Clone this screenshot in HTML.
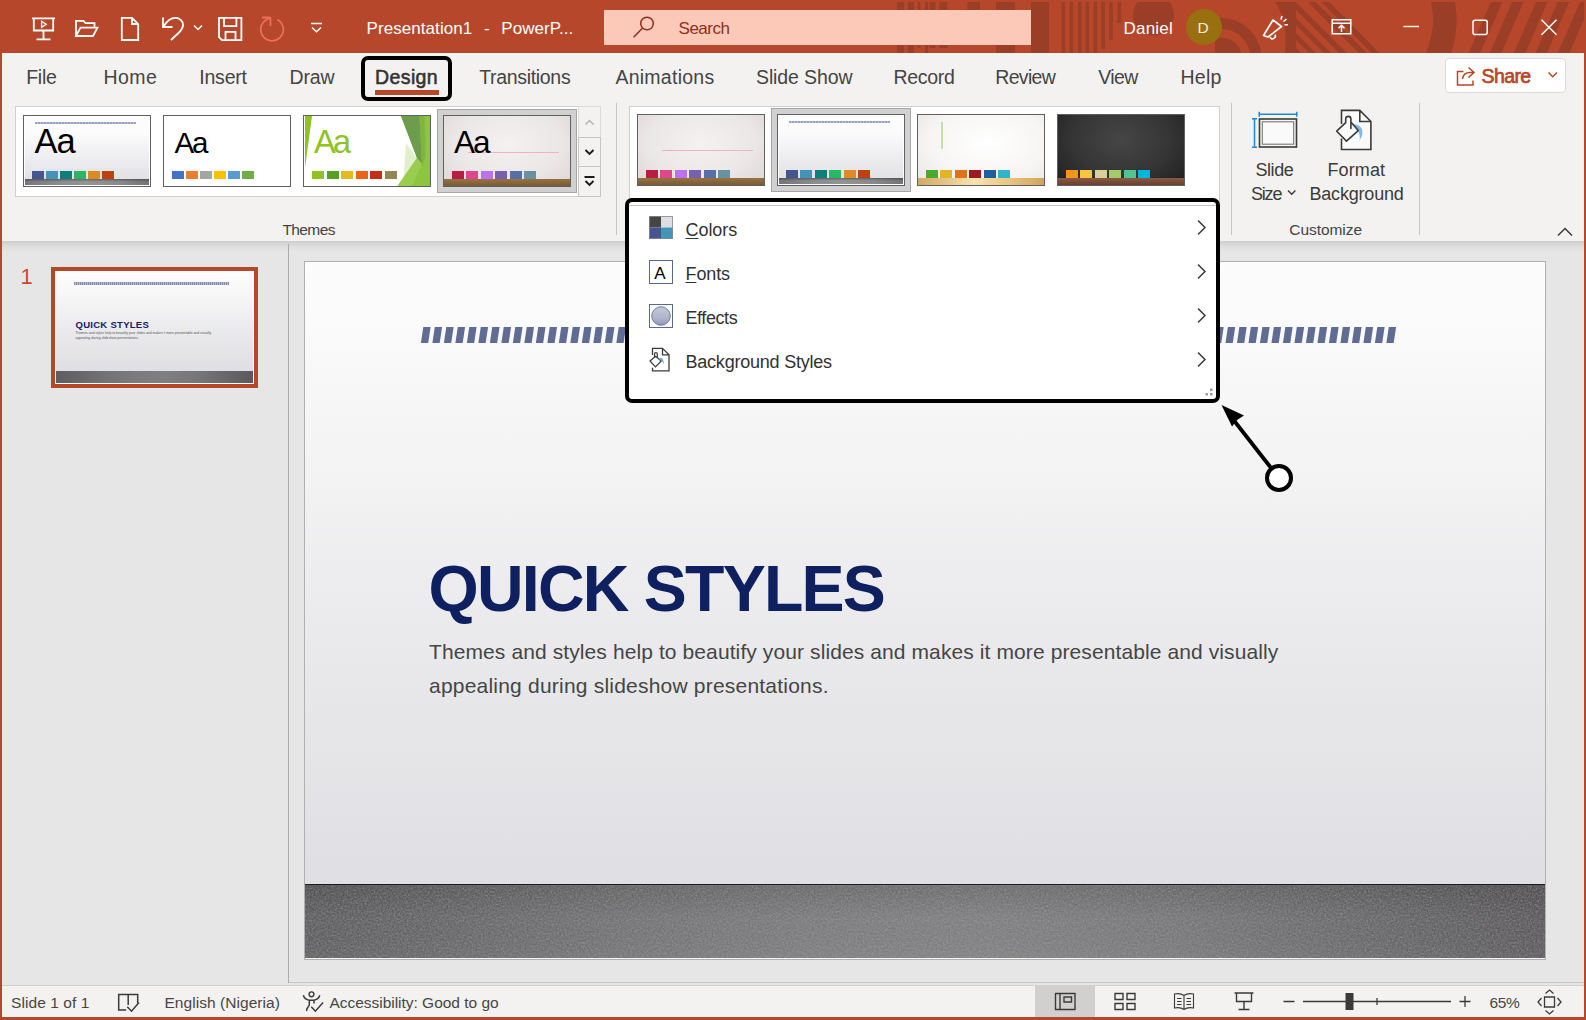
<!DOCTYPE html>
<html lang="en">
<head>
<meta charset="utf-8">
<title>Presentation1 - PowerPoint</title>
<style>
*{box-sizing:border-box;margin:0;padding:0}
html,body{width:1586px;height:1020px;overflow:hidden;background:#e6e6e6;font-family:"Liberation Sans",sans-serif;color:#3b3a39}
#app{position:relative;width:1586px;height:1020px;overflow:hidden;background:#e6e6e6}
.abs{position:absolute}
.t{position:absolute;white-space:nowrap;line-height:1}
/* title bar */
#titlebar{left:0;top:0;width:1586px;height:53px;background:#b7472a;overflow:hidden}
#tabs{left:2px;top:53px;width:1582px;height:51px;background:#f3f2f1}
#ribbon{left:2px;top:104px;width:1582px;height:137px;background:#f3f2f1}
#rshadow{left:2px;top:241px;width:1582px;height:11px;background:linear-gradient(#cdcdcd 0%,#d6d6d6 25%,#dfdfdf 55%,#e6e6e6 100%)}

.tab{font-size:19.5px;color:#454443;top:67.5px}
.gal{position:absolute;background:#fff;border:1px solid #d2d0ce}
.th{position:absolute;width:128px;height:72px;border:1px solid #606060;background:#fff;overflow:hidden;box-shadow:inset 0 0 0 1px #fff}
.th i{position:absolute;display:block;width:12px;height:8px}
.sel{position:absolute;background:#d1d1d1;border:1px solid #a6a6a6}
.sep{position:absolute;width:1px;background:#c8c6c4}
.glabel{font-size:15.5px;color:#444;top:222px}
.st{font-size:15.500px;color:#484644;top:994.5px}
.mi{font-size:18px;color:#323130}

/* borders */
#bl{left:0;top:0;width:2px;height:1020px;background:#b7472a}
#br{left:1584px;top:0;width:2px;height:1020px;background:#b7472a}
#bb{left:0;top:1017px;width:1586px;height:3px;background:#b7472a}
#status{left:2px;top:985px;width:1582px;height:32px;background:#f3f2f1}
</style>
</head>
<body>
<div id="app">
<!-- WORKSPACE -->
<div id="workspace" class="abs" style="left:0;top:241px;width:1586px;height:744px">
<div class="abs" style="left:288px;top:3px;width:1px;height:739px;background:#ababab"></div>
<div class="abs" style="left:289px;top:741px;width:1295px;height:1px;background:#c6c6c6"></div>
</div>
<!-- thumbnail panel -->
<div class="t" style="left:20.500px;top:266px;font-size:22px;color:#cc4a28">1</div>
<div class="abs" style="left:51px;top:267px;width:207px;height:121px;background:#b7472a"></div>
<div class="abs" style="left:55px;top:271px;width:199px;height:113px;background:linear-gradient(#fcfcfc 0%,#fafafa 10%,#f3f3f4 30%,#ebebed 50%,#e5e5e8 70%,#e0e0e4 88%,#dddde2 100%);overflow:hidden;box-shadow:inset 0 0 0 1px #fff">
<div class="abs" style="left:19px;top:11px;width:155px;height:3px;background:repeating-linear-gradient(90deg,#7f89ad 0 1px,#b9bfd3 1px 2px)"></div>
<div class="t" style="left:20.500px;top:49px;font-size:9.500px;font-weight:bold;color:#10235f;letter-spacing:.28px">QUICK STYLES</div>
<div class="t" style="left:20.500px;top:60.500px;font-size:3.400px;color:#55555a;letter-spacing:0">Themes and styles help to beautify your slides and makes it more presentable and visually</div>
<div class="t" style="left:20.500px;top:65.700px;font-size:3.400px;color:#55555a;letter-spacing:0">appealing during slideshow presentations.</div>
<div class="abs" style="left:1px;top:100px;width:197px;height:12px;background:linear-gradient(90deg,#5e5d5f 0%,#676668 12%,#737274 25%,#7b7b7d 40%,#7f7f81 55%,#787779 70%,#6c6b6d 82%,#626163 92%,#5b595c 100%)"></div>
</div>
<!-- slide -->
<div class="abs" style="left:304px;top:261px;width:1242px;height:699px;background:#b0b0b0"></div>
<div id="slide" class="abs" style="left:305px;top:262px;width:1240px;height:697px;background:linear-gradient(#fcfcfc 0%,#fafafa 10%,#f3f3f4 30%,#ebebed 50%,#e5e5e8 70%,#e0e0e4 88%,#dddde2 100%);overflow:hidden">
<div class="abs" style="left:-100px;top:-100px;width:1440px;height:720px;background:radial-gradient(ellipse 700px 330px at 50% 50%,rgba(255,255,255,.0),rgba(255,255,255,0))"></div>
<svg class="abs" style="left:0;top:60px" width="1240" height="26" viewBox="0 60 1240 26"><path fill="#5f6c94" d="M115.90 81l2.4-16h7.3l-2.4 16zM127.39 81l2.4-16h7.3l-2.4 16zM138.89 81l2.4-16h7.3l-2.4 16zM150.38 81l2.4-16h7.3l-2.4 16zM161.88 81l2.4-16h7.3l-2.4 16zM173.37 81l2.4-16h7.3l-2.4 16zM184.86 81l2.4-16h7.3l-2.4 16zM196.36 81l2.4-16h7.3l-2.4 16zM207.85 81l2.4-16h7.3l-2.4 16zM219.35 81l2.4-16h7.3l-2.4 16zM230.84 81l2.4-16h7.3l-2.4 16zM242.33 81l2.4-16h7.3l-2.4 16zM253.83 81l2.4-16h7.3l-2.4 16zM265.32 81l2.4-16h7.3l-2.4 16zM276.82 81l2.4-16h7.3l-2.4 16zM288.31 81l2.4-16h7.3l-2.4 16zM299.80 81l2.4-16h7.3l-2.4 16zM311.30 81l2.4-16h7.3l-2.4 16zM322.79 81l2.4-16h7.3l-2.4 16zM334.29 81l2.4-16h7.3l-2.4 16zM345.78 81l2.4-16h7.3l-2.4 16zM357.27 81l2.4-16h7.3l-2.4 16zM368.77 81l2.4-16h7.3l-2.4 16zM380.26 81l2.4-16h7.3l-2.4 16zM391.76 81l2.4-16h7.3l-2.4 16zM403.25 81l2.4-16h7.3l-2.4 16zM414.74 81l2.4-16h7.3l-2.4 16zM426.24 81l2.4-16h7.3l-2.4 16zM437.73 81l2.4-16h7.3l-2.4 16zM449.23 81l2.4-16h7.3l-2.4 16zM460.72 81l2.4-16h7.3l-2.4 16zM472.21 81l2.4-16h7.3l-2.4 16zM483.71 81l2.4-16h7.3l-2.4 16zM495.20 81l2.4-16h7.3l-2.4 16zM506.70 81l2.4-16h7.3l-2.4 16zM518.19 81l2.4-16h7.3l-2.4 16zM529.68 81l2.4-16h7.3l-2.4 16zM541.18 81l2.4-16h7.3l-2.4 16zM552.67 81l2.4-16h7.3l-2.4 16zM564.17 81l2.4-16h7.3l-2.4 16zM575.66 81l2.4-16h7.3l-2.4 16zM587.15 81l2.4-16h7.3l-2.4 16zM598.65 81l2.4-16h7.3l-2.4 16zM610.14 81l2.4-16h7.3l-2.4 16zM621.64 81l2.4-16h7.3l-2.4 16zM633.13 81l2.4-16h7.3l-2.4 16zM644.62 81l2.4-16h7.3l-2.4 16zM656.12 81l2.4-16h7.3l-2.4 16zM667.61 81l2.4-16h7.3l-2.4 16zM679.11 81l2.4-16h7.3l-2.4 16zM690.60 81l2.4-16h7.3l-2.4 16zM702.09 81l2.4-16h7.3l-2.4 16zM713.59 81l2.4-16h7.3l-2.4 16zM725.08 81l2.4-16h7.3l-2.4 16zM736.58 81l2.4-16h7.3l-2.4 16zM748.07 81l2.4-16h7.3l-2.4 16zM759.56 81l2.4-16h7.3l-2.4 16zM771.06 81l2.4-16h7.3l-2.4 16zM782.55 81l2.4-16h7.3l-2.4 16zM794.05 81l2.4-16h7.3l-2.4 16zM805.54 81l2.4-16h7.3l-2.4 16zM817.03 81l2.4-16h7.3l-2.4 16zM828.53 81l2.4-16h7.3l-2.4 16zM840.02 81l2.4-16h7.3l-2.4 16zM851.52 81l2.4-16h7.3l-2.4 16zM863.01 81l2.4-16h7.3l-2.4 16zM874.50 81l2.4-16h7.3l-2.4 16zM886.00 81l2.4-16h7.3l-2.4 16zM897.49 81l2.4-16h7.3l-2.4 16zM908.99 81l2.4-16h7.3l-2.4 16zM920.48 81l2.4-16h7.3l-2.4 16zM931.97 81l2.4-16h7.3l-2.4 16zM943.47 81l2.4-16h7.3l-2.4 16zM954.96 81l2.4-16h7.3l-2.4 16zM966.46 81l2.4-16h7.3l-2.4 16zM977.95 81l2.4-16h7.3l-2.4 16zM989.44 81l2.4-16h7.3l-2.4 16zM1000.94 81l2.4-16h7.3l-2.4 16zM1012.43 81l2.4-16h7.3l-2.4 16zM1023.93 81l2.4-16h7.3l-2.4 16zM1035.42 81l2.4-16h7.3l-2.4 16zM1046.91 81l2.4-16h7.3l-2.4 16zM1058.41 81l2.4-16h7.3l-2.4 16zM1069.90 81l2.4-16h7.3l-2.4 16zM1081.40 81l2.4-16h7.3l-2.4 16z"/></svg>
<div class="t" id="qtitle" style="left:123.5px;top:294.5px;font-size:64.5px;font-weight:bold;color:#0e2060;letter-spacing:-1.75px">QUICK STYLES</div>
<div class="t" id="sub1" style="left:124px;top:379px;font-size:21px;color:#454545;letter-spacing:.1px">Themes and styles help to beautify your slides and makes it more presentable and visually</div>
<div class="t" id="sub2" style="left:124px;top:413px;font-size:21px;color:#454545;letter-spacing:.21px">appealing during slideshow presentations.</div>
<div class="abs" style="left:0;top:622px;width:1240px;height:75px;background:linear-gradient(90deg,#5e5d5f 0%,#676668 12%,#737274 25%,#7b7b7d 40%,#7f7f81 55%,#787779 70%,#6c6b6d 82%,#626163 92%,#5b595c 100%);border-top:1.500px solid #1c1c1e"></div>
<svg class="abs" style="left:0;top:624px" width="1240" height="73"><defs><filter id="nz" x="0" y="0" width="100%" height="100%"><feTurbulence type="fractalNoise" baseFrequency=".55" numOctaves="3" seed="4"/><feColorMatrix type="matrix" values="0 0 0 0 .42  0 0 0 0 .41  0 0 0 0 .41  .9 .9 .9 0 -1.05"/></filter><linearGradient id="fv" x1="0" y1="0" x2="0" y2="1"><stop offset="0" stop-color="#000" stop-opacity=".14"/><stop offset=".45" stop-color="#000" stop-opacity="0"/><stop offset="1" stop-color="#fff" stop-opacity=".03"/></linearGradient></defs><rect width="1240" height="73" fill="url(#fv)"/><rect width="1240" height="73" filter="url(#nz)" opacity=".5"/></svg>
<div class="abs" style="left:0;top:696px;width:1240px;height:1px;background:#f4f4f4"></div>
</div>


<!-- TITLEBAR -->
<div id="titlebar" class="abs">
<svg class="abs" style="left:880px;top:0" width="706" height="53" viewBox="880 0 706 53">
<defs><clipPath id="tbc"><rect x="880" y="2" width="706" height="51"/></clipPath></defs>
<g fill="#9a3e28" clip-path="url(#tbc)">
<rect x="897" y="2" width="7" height="51"/><rect x="907.7" y="2" width="6.3" height="51"/><rect x="917.5" y="2" width="3" height="46"/><rect x="925" y="2" width="3" height="51"/><rect x="929.5" y="2" width="6" height="46"/><rect x="939.5" y="2" width="8" height="46"/><rect x="967.4" y="2" width="12.6" height="8"/><rect x="996" y="2" width="19" height="51"/>
<rect x="1031" y="2" width="18" height="51"/>
<rect x="1061.6" y="2" width="3.6" height="51"/><rect x="1069.5" y="2" width="3.6" height="51"/><rect x="1078" y="2" width="3.6" height="51"/><rect x="1085.5" y="2" width="3.6" height="51"/><rect x="1093.5" y="2" width="3.6" height="51"/><rect x="1101.3" y="2" width="3.6" height="47"/><rect x="1109.2" y="2" width="3.6" height="38"/><rect x="1117.5" y="2" width="3.6" height="21"/>
<circle cx="1153.5" cy="15" r="20.5"/>
<clipPath id="rgc"><rect x="1215" y="0" width="60" height="53"/></clipPath><g clip-path="url(#rgc)"><circle cx="1221" cy="58.400" r="35" fill="none" stroke="#9a3e28" stroke-width="10.900"/><circle cx="1221" cy="58.400" r="21"/></g>
<path d="M1275 2h21l51 51h-62c2-18 0-36-10-51z"/>
<path d="M1307.800 2h8l51 51h-8zM1321.400 2h8l50 51h-8z"/>
<path fill="#b7472a" d="M1296 10v8l35 35h8zM1296 25v8l20 20h8zM1296 40v8l5 5h8z"/>
<path d="M1431 2h24c3 17 2 34-4 51h-25c7-17 9-34 5-51z"/>
<path d="M1490.8 2h11.5L1480.2 53h-11.5zM1512 2h11.5L1501.4 53h-11.5zM1536 2h11.5L1525.4 53h-11.5zM1557.6 2h11.5L1547.0 53h-11.5zM1580 2h11.5L1569.4 53h-11.5z"/>
</g>
</svg>
<svg class="abs" style="left:0;top:0" width="360" height="53" viewBox="0 0 360 53" fill="none" stroke="#fff" stroke-width="1.8">
<!-- slideshow -->
<path d="M32 18.3h23M33.8 18.3v12.2h19.4V18.3M43.5 30.5v8.8M36.5 39.3h14"/>
<path d="M41.6 21.3l4.6 3-4.6 3z" stroke-width="1.3"/>
<!-- folder -->
<path d="M76 36V20.8h7.5l2 2.3h9v4.5M76 36l4.5-8.4h17L93 36z"/>
<!-- page -->
<path d="M121.8 17.8h10.2l6.2 6.2v16h-16.4zM132 17.8v6.2h6.2"/>
<!-- undo -->
<path d="M163 17.5v9.5h9.5M163.5 26.5c3-5 7-8.7 12-8.7 4 0 7.5 3.2 7.5 7.2 0 3-1.5 5-4 7.500l-8 7.5"/>
<path d="M194 25.5l4 4 4-4" stroke-width="1.5"/>
<!-- save -->
<path d="M219 17.800h22.400v22.400h-19.400l-3-3zM224 17.800v8.400h12.400v-8.400M225.5 40.200v-8.400h10v8.4"/>
<!-- redo -->
<g stroke="#e8705a"><path d="M270.5 17.500h-8.500M270.5 17.500v8.500M270.5 18.300a11.3 11.3 0 1 0 6.8 1.2"/></g>
<!-- customize -->
<path d="M311 23.600h11M312 27.500l4.5 4.3 4.5-4.3" stroke-width="1.5"/>
</svg>
<div class="t" style="left:366.500px;top:19.500px;font-size:17px;color:#fff;letter-spacing:.07px;word-spacing:1px">Presentation1&nbsp; - &nbsp;PowerP...</div>
<div class="abs" style="left:604px;top:10px;width:427px;height:35px;background:#fcc9b8"></div>
<svg class="abs" style="left:630px;top:13px" width="30" height="30" viewBox="630 13 30 30" fill="none" stroke="#8e2f1d" stroke-width="1.5"><circle cx="647" cy="23.5" r="6.3"/><path d="M642.6 28l-9 9.2"/></svg>
<div class="t" style="left:678.6px;top:19.500px;font-size:17px;color:#8e2f1d;letter-spacing:-0.52px">Search</div>
<div class="t" style="left:1123.500px;top:19.500px;font-size:17px;color:#fff;letter-spacing:.2px">Daniel</div>
<div class="abs" style="left:1186px;top:9px;width:36px;height:36px;border-radius:50%;background:#98700f"></div>
<div class="t" style="left:1197.500px;top:19.500px;font-size:15.500px;color:#f4ecd9">D</div>
<svg class="abs" style="left:1250px;top:0" width="336" height="53" viewBox="1250 0 336 53" fill="none" stroke="#fff" stroke-width="1.6">
<!-- megaphone -->
<path d="M1263.5 35.500l9.5-15.5 8.5 6.5-13.5 10.500zM1270 37.200a2.7 2.7 0 0 0 5-2.600M1281 19.500l1-3.500M1283.5 21.500l3-2.500M1284.5 24.800l3.5 0" stroke-linejoin="round"/>
<!-- ribbon display -->
<path d="M1332.2 19.800h18.600v14h-18.600zM1332.2 23.300h18.600M1341.5 32v-6.500M1338.5 28.300l3-3 3 3" stroke-width="1.5"/>
<!-- min -->
<path d="M1403.5 26.500h15.5" stroke-width="1.4"/>
<rect x="1473" y="20.3" width="14.2" height="14.2" rx="2" stroke-width="1.5"/>
<path d="M1541.5 19.700l15 15M1556.5 19.700l-15 15" stroke-width="1.5"/>
</svg>
</div>
<div id="tabs" class="abs"></div>
<div class="t tab" style="left:26.2px;letter-spacing:-0.23px">File</div><div class="t tab" style="left:103.4px;letter-spacing:0.50px">Home</div><div class="t tab" style="left:199.3px;letter-spacing:-0.22px">Insert</div><div class="t tab" style="left:289.5px;letter-spacing:-0.17px">Draw</div><div class="t tab" style="left:479.2px;letter-spacing:-0.32px">Transitions</div><div class="t tab" style="left:615.4px;letter-spacing:0.26px">Animations</div><div class="t tab" style="left:756.0px;letter-spacing:-0.11px">Slide Show</div><div class="t tab" style="left:893.4px;letter-spacing:-0.28px">Record</div><div class="t tab" style="left:995.3px;letter-spacing:-0.68px">Review</div><div class="t tab" style="left:1098.2px;letter-spacing:-0.57px">View</div><div class="t tab" style="left:1180.5px;letter-spacing:0.27px">Help</div><div class="t tab" style="left:375px;top:67.5px;font-size:19.5px;color:#333231;-webkit-text-stroke:.55px #333231;letter-spacing:.4px">Design</div>
<div class="abs" style="left:375px;top:90px;width:64px;height:5px;background:#b7472a"></div>
<div class="abs" style="left:361px;top:56px;width:91px;height:45px;border:4px solid #000;border-radius:7px"></div>
<div class="abs" style="left:1445px;top:58px;width:121px;height:35px;background:#fff;border:1px solid #dcdad8;border-radius:4px"></div>
<svg class="abs" style="left:1452px;top:64px" width="26" height="24" viewBox="1452 64 26 24" fill="none" stroke="#b7472a" stroke-width="1.5"><path d="M1463.500 71.500h-6v13.500h15.500v-4.500M1468.500 67.500l5.500 5-5.500 5M1473.500 72.500h-3.500c-4.500 0-7 2.500-7.500 6.500"/></svg>
<div class="t" style="left:1481.5px;top:67px;font-size:19.5px;color:#b7472a;-webkit-text-stroke:.7px #b7472a;letter-spacing:-.6px">Share</div>
<svg class="abs" style="left:1546px;top:70px" width="14" height="10" viewBox="0 0 14 10" fill="none" stroke="#b7472a" stroke-width="1.5"><path d="M2.500 2.500l4.200 4.200 4.200-4.200"/></svg>

<div id="ribbon" class="abs"></div>

<div class="gal" style="left:15px;top:106px;width:564px;height:91px"></div>
<div class="abs" style="left:578px;top:106px;width:23px;height:32px;border:1px solid #dddbd9;background:#f3f2f1"></div>
<div class="abs" style="left:578px;top:137px;width:23px;height:30px;border:1px solid #c8c6c4;background:#f3f2f1"></div>
<div class="abs" style="left:578px;top:166px;width:23px;height:31px;border:1px solid #c8c6c4;background:#f3f2f1"></div>
<svg class="abs" style="left:578px;top:106px" width="23" height="91" viewBox="0 0 23 91" fill="none" stroke-width="1.5"><path d="M7.500 18.500l4-4 4 4" stroke="#b5b3b1"/><path d="M7.500 44l4 4 4-4M6.500 71h10M7.500 75l4 4 4-4" stroke="#1b1b1b" stroke-width="1.9"/></svg>
<div class="sel" style="left:437px;top:109px;width:140px;height:84px"></div>
<!-- theme 1 -->
<div class="th" style="left:23px;top:115px;background:linear-gradient(#fdfdfd 0%,#fbfbfc 25%,#e4e4e8 85%,#dedee3 100%)">
<div class="abs" style="left:11px;top:6px;width:101px;height:2px;background:repeating-linear-gradient(90deg,#98a1c2 0 2px,#b9bfd6 2px 3px)"></div>
<div class="t" style="left:10.500px;top:7.500px;font-size:34.500px;color:#000;letter-spacing:-.9px">Aa</div>
<i style="left:8px;top:55px;background:#44558f"></i><i style="left:22px;top:55px;background:#4294b8"></i><i style="left:36px;top:55px;background:#0c7f7d"></i><i style="left:50px;top:55px;background:#2db566"></i><i style="left:64px;top:55px;background:#e08a26"></i><i style="left:78px;top:55px;background:#bd420f"></i>
<div class="abs" style="left:1px;top:63px;width:124px;height:6px;background:linear-gradient(rgba(0,0,0,.3),rgba(0,0,0,0) 45%),linear-gradient(90deg,#767577,#8d8d8f 30%,#949496 50%,#8a8a8c 75%,#727173)"></div>
</div>
<!-- theme 2 -->
<div class="th" style="left:163px;top:115px">
<div class="t" style="left:10.500px;top:11.500px;font-size:29.500px;color:#000;letter-spacing:-2.200px">Aa</div>
<i style="left:8px;top:55px;background:#4472c4"></i><i style="left:22px;top:55px;background:#ed7d31"></i><i style="left:36px;top:55px;background:#a5a5a5"></i><i style="left:50px;top:55px;background:#ffc000"></i><i style="left:64px;top:55px;background:#5b9bd5"></i><i style="left:78px;top:55px;background:#70ad47"></i>
</div>
<!-- theme 3 -->
<div class="th" style="left:303px;top:115px">
<svg class="abs" style="left:0;top:0" width="126" height="70" viewBox="0 0 126 70"><path d="M0 0h8L1 52V0z" fill="#90c226"/><path d="M102 27l11 15-13.400 21z" fill="#e2efcb"/><path d="M97 0h29v70H93.500l19.500-28z" fill="#8cc63f"/><path d="M97 0h18.500l2.500 48-5-6z" fill="#6d9d4c"/><path d="M115.500 0h5l1 40-3.500 12z" fill="#7fb43f"/><path d="M113 42l5 6-10 22h-14.500z" fill="#9fd054" opacity=".7"/></svg>
<div class="t" style="left:10px;top:9px;font-size:32.500px;color:#90c226;letter-spacing:-2.600px;margin-top:1px">Aa</div>
<i style="left:8px;top:55px;background:#90c226"></i><i style="left:22.5px;top:55px;background:#54a021"></i><i style="left:37px;top:55px;background:#e6b91e"></i><i style="left:51.5px;top:55px;background:#e76618"></i><i style="left:66px;top:55px;background:#c42f1a"></i><i style="left:80.5px;top:55px;background:#918655"></i>
</div>
<!-- theme 4 -->
<div class="th" style="left:443px;top:115px;background:radial-gradient(ellipse at 50% 40%,#f4f1f0 0%,#ebe7e6 60%,#dcd6d5 100%);box-shadow:none">
<div class="abs" style="left:24px;top:36px;width:91px;height:1px;background:#efb3c3"></div>
<div class="t" style="left:10px;top:10.500px;font-size:31.500px;color:#000;letter-spacing:-2px">Aa</div>
<i style="left:8px;top:55px;background:#b71e42"></i><i style="left:22.4px;top:55px;background:#de478e"></i><i style="left:36.8px;top:55px;background:#bc72f0"></i><i style="left:51.2px;top:55px;background:#795faf"></i><i style="left:65.6px;top:55px;background:#586ea6"></i><i style="left:80px;top:55px;background:#6892a0"></i>
<div class="abs" style="left:0;top:63px;width:126px;height:7px;background:linear-gradient(#967344,#7b5a33)"></div>
</div>
<div class="sep" style="left:616px;top:103px;height:132px"></div>
<div class="t glabel" style="left:282.5px;letter-spacing:-0.62px">Themes</div>
<!-- variants -->
<div class="gal" style="left:629px;top:106px;width:591px;height:100px"></div>
<div class="sel" style="left:771px;top:108px;width:140px;height:84px"></div>
<div class="th" style="left:637px;top:114px;background:radial-gradient(ellipse at 50% 40%,#f4f1f0 0%,#ebe7e6 60%,#dcd6d5 100%);box-shadow:none">
<div class="abs" style="left:24px;top:35px;width:91px;height:1px;background:#efb3c3"></div>
<i style="left:8px;top:55px;background:#b71e42"></i><i style="left:22.4px;top:55px;background:#de478e"></i><i style="left:36.8px;top:55px;background:#bc72f0"></i><i style="left:51.2px;top:55px;background:#795faf"></i><i style="left:65.6px;top:55px;background:#586ea6"></i><i style="left:80px;top:55px;background:#6892a0"></i>
<div class="abs" style="left:0;top:63px;width:126px;height:7px;background:linear-gradient(#967344,#7b5a33)"></div>
</div>
<div class="th" style="left:777px;top:114px;background:linear-gradient(#fdfdfd 0%,#fbfbfc 25%,#e4e4e8 85%,#dedee3 100%)">
<div class="abs" style="left:11px;top:6px;width:101px;height:2px;background:repeating-linear-gradient(90deg,#98a1c2 0 2px,#b9bfd6 2px 3px)"></div>
<i style="left:8px;top:55px;background:#44558f"></i><i style="left:22.4px;top:55px;background:#4294b8"></i><i style="left:36.8px;top:55px;background:#0c7f7d"></i><i style="left:51.2px;top:55px;background:#2db566"></i><i style="left:65.6px;top:55px;background:#e08a26"></i><i style="left:80px;top:55px;background:#bd420f"></i>
<div class="abs" style="left:1px;top:63px;width:124px;height:6px;background:linear-gradient(rgba(0,0,0,.3),rgba(0,0,0,0) 45%),linear-gradient(90deg,#767577,#8d8d8f 30%,#949496 50%,#8a8a8c 75%,#727173)"></div>
</div>
<div class="th" style="left:917px;top:114px;background:radial-gradient(ellipse at 55% 40%,#fff 0%,#f6f5f3 60%,#e6e3e0 100%);box-shadow:none">
<div class="abs" style="left:22.500px;top:7px;width:2px;height:27px;background:#c3e0ac"></div>
<i style="left:8px;top:55px;background:#4ea72e"></i><i style="left:22.4px;top:55px;background:#e3b428"></i><i style="left:36.8px;top:55px;background:#e0721c"></i><i style="left:51.2px;top:55px;background:#9b1c20"></i><i style="left:65.6px;top:55px;background:#1f5f9e"></i><i style="left:80px;top:55px;background:#2db5cb"></i>
<div class="abs" style="left:0;top:63px;width:126px;height:7px;background:linear-gradient(90deg,#d1a963,#f7e3b0 45%,#e9c885 70%,#cfa55e)"></div>
</div>
<div class="th" style="left:1057px;top:114px;background:radial-gradient(ellipse at 50% 35%,#474647 0%,#363536 55%,#1f1e1f 100%);box-shadow:none">
<i style="left:8px;top:55px;background:#f7941d"></i><i style="left:22.4px;top:55px;background:#f8c440"></i><i style="left:36.8px;top:55px;background:#d8d09a"></i><i style="left:51.2px;top:55px;background:#a2cc68"></i><i style="left:65.6px;top:55px;background:#4ec596"></i><i style="left:80px;top:55px;background:#00b6de"></i>
<div class="abs" style="left:0px;top:63px;width:126px;height:7px;background:linear-gradient(#8a5a42,#6b4030)"></div>
</div>
<div class="sep" style="left:1231px;top:103px;height:132px"></div>
<div class="sep" style="left:1419px;top:103px;height:132px"></div>
<!-- customize -->
<svg class="abs" style="left:1250px;top:106px" width="130" height="48" viewBox="1250 106 130 48" fill="none">
<path d="M1259.200 111.700v5M1296.800 111.700v5M1259.200 114.200h37.600M1252 118.700h5M1252 147.200h5M1254.500 118.700v28.500" stroke="#1e88d2" stroke-width="1.500"/>
<rect x="1259.500" y="119" width="37" height="28" stroke="#3b3a39" stroke-width="1.600" fill="#f7f7f7"/>
<rect x="1262.300" y="121.800" width="31.400" height="22.400" stroke="#797775" stroke-width="1.100" fill="#fafafa"/>
<path d="M1341.500 110.400h18.300l11.100 11.100v28h-29.400z" fill="#fafafa"/>
<path d="M1341.500 124v-13.600h18.300l11.100 11.100v28h-29.400v-11M1359.800 110.400v11.100h11.100" stroke="#3b3a39" stroke-width="1.600"/>
<path d="M1352.400 124.400c5.500-.6 9.600 2.400 10 7 .3 3.600-1 6.500-2.700 8.300.6-4.500-.5-9.500-4.700-12.300z" fill="#7fb9ea"/>
<path d="M1336.700 131.200l9-8.500v-3.700a2.600 2.600 0 0 1 5.200 0v9.500v-6.500l7.300 8.600-11.700 10.500z" stroke="#3b3a39" stroke-width="1.600" fill="#fafafa" stroke-linejoin="round"/>
</svg>
<div class="t" style="left:1255.5px;top:160.500px;font-size:18px;color:#3b3a39;letter-spacing:-0.45px">Slide</div>
<div class="t" style="left:1251px;top:184.500px;font-size:18px;color:#3b3a39;letter-spacing:-1.2px">Size</div>
<svg class="abs" style="left:1286px;top:188px" width="12" height="9" viewBox="0 0 12 9" fill="none" stroke="#3b3a39" stroke-width="1.400"><path d="M2 2.500l3.700 3.700 3.700-3.700"/></svg>
<div class="t" style="left:1327.5px;top:160.500px;font-size:18px;color:#3b3a39;letter-spacing:0.10px">Format</div>
<div class="t" style="left:1309.500px;top:184.500px;font-size:18px;color:#3b3a39;letter-spacing:-.2px">Background</div>
<div class="t glabel" style="left:1289.3px;letter-spacing:-0.06px">Customize</div>
<svg class="abs" style="left:1555px;top:225px" width="20" height="14" viewBox="0 0 20 14" fill="none" stroke="#3b3a39" stroke-width="1.500"><path d="M3 10.500l7-7 7 7"/></svg>

<div id="rshadow" class="abs"></div>
<div class="abs" style="left:288px;top:244px;width:1px;height:10px;background:#ababab"></div>
<div id="overlay" class="abs" style="left:0;top:0;width:0;height:0">
<!-- menu -->
<div class="abs" style="left:629px;top:202px;width:587px;height:198px;background:#fff;border-top:0"></div>
<div class="abs" style="left:629px;top:205px;width:587px;height:1px;background:#c8c6c4"></div>
<div class="abs" style="left:625px;top:198px;width:595px;height:205px;border:4px solid #000;border-radius:7px"></div>
<svg class="abs" style="left:640px;top:209px" width="40" height="170" viewBox="640 210 40 170" fill="none">
<rect x="649" y="217" width="12" height="11.500" fill="#454545"/><rect x="661" y="217" width="12" height="11.500" fill="#dcdce2"/><rect x="649" y="228.500" width="12" height="11.500" fill="#44558f"/><rect x="661" y="228.500" width="12" height="11.500" fill="#4294b8"/><rect x="649.500" y="217.500" width="23" height="22" stroke="#8a8a8a" stroke-width=".8"/>
<rect x="649.500" y="261.500" width="23" height="23" stroke="#5a6894" stroke-width="1" fill="#fff"/>
<rect x="649.500" y="305.500" width="23" height="23" stroke="#5a6894" stroke-width="1" fill="#fff"/>
<defs><linearGradient id="eg" x1="0" y1="0" x2="0" y2="1"><stop offset="0" stop-color="#c3c7d8"/><stop offset=".6" stop-color="#b1b6cb"/><stop offset="1" stop-color="#8f96b3"/></linearGradient></defs>
<circle cx="661" cy="317" r="9.300" fill="url(#eg)" stroke="#6a7397" stroke-width=".9"/>
<path d="M652.500 356v-6.700h10l6.500 6.500v16h-16.500v-3M662.500 349.300v6.500h6.500" stroke="#3b3a39" stroke-width="1.300"/>
<path d="M650 362l5.500-4.800 5.800 4.800-5.800 5.800zM654.500 358.500v-3.500a1.400 1.400 0 0 1 2.800 0v4" stroke="#3b3a39" stroke-width="1.200" fill="#fff"/>
<path d="M660.500 358.500c2.800 1 3.800 3.500 3 7c-.6-2.700-1.700-4.300-4.200-5.300z" fill="#69afe5"/>
</svg>
<div class="t" style="left:654.300px;top:264.500px;font-size:17px;color:#000">A</div>
<div class="t mi" style="left:685.500px;top:220.5px;letter-spacing:-.06px"><span style="text-decoration:underline;text-decoration-thickness:1px;text-underline-offset:2px">C</span>olors</div>
<div class="t mi" style="left:685.500px;top:264.5px;letter-spacing:-.12px"><span style="text-decoration:underline;text-decoration-thickness:1px;text-underline-offset:2px">F</span>onts</div>
<div class="t mi" style="left:685.500px;top:308.5px;letter-spacing:-.42px">Effects</div>
<div class="t mi" style="left:685.500px;top:352.5px;letter-spacing:-.22px">Background Styles</div>
<svg class="abs" style="left:1190px;top:210px" width="30" height="190" viewBox="1190 210 30 190" fill="none" stroke="#3b3a39" stroke-width="1.500">
<path d="M1198 220.500l7 7-7 7M1198 264.500l7 7-7 7M1198 308.500l7 7-7 7M1198 352.500l7 7-7 7"/>
<g fill="#9c9c9c" stroke="none"><rect x="1210" y="388.500" width="2.500" height="2.500"/><rect x="1210" y="393" width="2.500" height="2.500"/><rect x="1205.500" y="393" width="2.500" height="2.500"/></g>
</svg>
<!-- arrow annotation -->
<svg class="abs" style="left:1210px;top:395px" width="100" height="110" viewBox="1210 395 100 110">
<path d="M1271.500 468.500L1232 418" stroke="#000" stroke-width="3.800" fill="none"/>
<path d="M1221.500 405l22.500 10.500-7 4.500-5 6.500z" fill="#000"/>
<circle cx="1279" cy="478" r="12" fill="#fff" stroke="#000" stroke-width="4"/>
</svg>
</div>
<!-- STATUS -->
<div id="status" class="abs"></div>
<div class="abs" style="left:2px;top:985px;width:1582px;height:1px;background:#d2d2d2"></div>
<div class="t st" style="left:11.1px;letter-spacing:0.06px">Slide 1 of 1</div>
<div class="t st" style="left:164.4px;letter-spacing:0.06px">English (Nigeria)</div>
<div class="t st" style="left:329.4px;letter-spacing:-0.02px">Accessibility: Good to go</div>
<div class="t st" style="left:1489.4px;letter-spacing:-0.35px">65%</div>
<div class="abs" style="left:1035px;top:985px;width:60px;height:32px;background:#d2d0ce"></div>
<svg class="abs" style="left:100px;top:985px" width="250" height="32" viewBox="100 985 250 32" fill="none" stroke="#3b3a39" stroke-width="1.300">
<path d="M128.200 994.500v10.500M128.200 994.500h-9.500v15.500h7.500M128.200 994.500h9.500v8.500M127.300 1006.800l4.200 4.400 7.500-8.700" stroke-width="1.500"/>
<circle cx="311.500" cy="994.300" r="2.400" stroke-width="1.400"/><path d="M303.300 995.200c1 3.300 3.500 4.600 6 5h4.500c2.500-.4 5-1.700 6-5M309.300 1000.200v4.300c0 2.500-3.500 3-2.500 6.500M314 1000.200v3.300M311.300 1006.800l4 4.400 7.800-8.700" stroke-width="1.500"/>
</svg>
<svg class="abs" style="left:1040px;top:985px" width="544" height="32" viewBox="1040 985 544 32" fill="none" stroke="#3b3a39" stroke-width="1.400">
<path d="M1055.500 993.500h19.500v16h-19.500zM1060 993.500v16M1064 997h7.500v5h-7.500z"/>
<path d="M1115 993.500h8v6h-8zM1127 993.500h8v6h-8zM1115 1003.500h8v6h-8zM1127 1003.500h8v6h-8z"/>
<path d="M1184 995.500v14M1184 995.500c-2.500-1.800-6-2.200-9.500-1.500v14c3.500-.7 7-.3 9.500 1.500M1184 995.500c2.500-1.800 6-2.200 9.500-1.500v14c-3.500-.7-7-.3-9.500 1.500M1177 998.500h4.500M1177 1001.500h4.500M1177 1004.500h4.500M1186.500 998.500h4.500M1186.500 1001.500h4.500M1186.500 1004.500h4.500" stroke-width="1.100"/>
<path d="M1234.500 993h19M1236.500 993v8.500h15V993M1244 1001.500v8M1238.500 1009.500h11"/>
<path d="M1283.500 1001.500h11M1303 1001.500h148M1459.500 1001.500h11M1465 996v11M1377 998v7" stroke-width="1.300"/>
<rect x="1345.5" y="993" width="8" height="17" fill="#3b3a39" stroke="none"/>
<path d="M1544.500 997h10v10h-10zM1545.500 993.500l4-3.500 4 3.500M1545.500 1010.500l4 3.500 4-3.500M1541.500 998l-3.500 4 3.500 4M1557.500 998l3.500 4-3.500 4" stroke-width="1.300"/>
</svg>

<div id="bl" class="abs"></div><div id="br" class="abs"></div><div id="bb" class="abs"></div>
</div>
</body>
</html>
